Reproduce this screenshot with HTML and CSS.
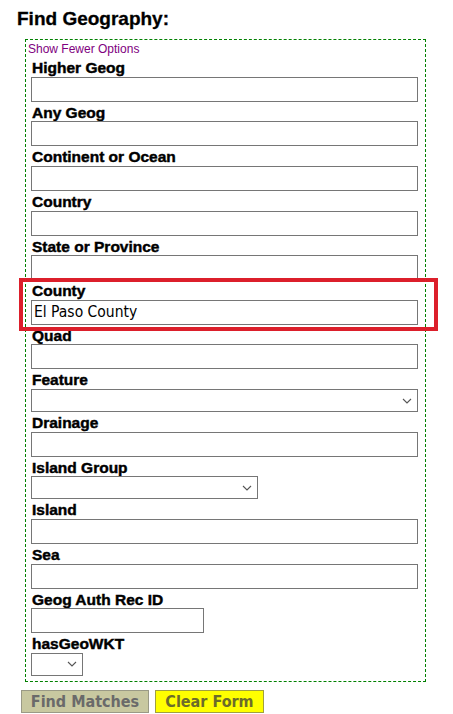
FILE: index.html
```html
<!DOCTYPE html>
<html>
<head>
<meta charset="utf-8">
<title>Find Geography</title>
<link rel="stylesheet" href="styles.css">
</head>
<body>
<h3 class="title">Find Geography:</h3>
<form class="search">
  <div class="box">
    <a class="toggle" href="#">Show Fewer Options</a>
    <div class="fields">
      <div class="field"><label class="lbl">Higher Geog</label><input class="txt full" type="text"></div>
      <div class="field"><label class="lbl">Any Geog</label><input class="txt full" type="text"></div>
      <div class="field"><label class="lbl">Continent or Ocean</label><input class="txt full" type="text"></div>
      <div class="field"><label class="lbl">Country</label><input class="txt full" type="text"></div>
      <div class="field"><label class="lbl">State or Province</label><input class="txt full" type="text"></div>
      <div class="field highlighted"><label class="lbl">County</label><input class="txt full" type="text" value="El Paso County"><span class="mark"></span></div>
      <div class="field"><label class="lbl">Quad</label><input class="txt full" type="text"></div>
      <div class="field"><label class="lbl">Feature</label><select class="sel full"><option></option></select></div>
      <div class="field"><label class="lbl">Drainage</label><input class="txt full" type="text"></div>
      <div class="field"><label class="lbl">Island Group</label><select class="sel mid"><option></option></select></div>
      <div class="field"><label class="lbl">Island</label><input class="txt full" type="text"></div>
      <div class="field"><label class="lbl">Sea</label><input class="txt full" type="text"></div>
      <div class="field"><label class="lbl">Geog Auth Rec ID</label><input class="txt short" type="text"></div>
      <div class="field"><label class="lbl">hasGeoWKT</label><select class="sel tiny"><option></option></select></div>
    </div>
  </div>
  <div class="actions">
    <button type="button" class="btn find">Find Matches</button>
    <button type="reset" class="btn clear">Clear Form</button>
  </div>
</form>
</body>
</html>
```
FILE: styles.css
```css
html, body {
  margin: 0;
  padding: 0;
  background: #ffffff;
}
body {
  font-family: "Liberation Sans", Arial, sans-serif;
  color: #000;
}
.title {
  margin: 8px 0 9px 17px;
  font-size: 19px;
  line-height: 22px;
  font-weight: bold;
  -webkit-text-stroke: 0.3px #000;
}
.search {
  margin: 0;
}
.box {
  margin-left: 25px;
  width: 397px;
  border: 1px dashed #008000;
  padding: 2px 0 3px 2px;
  box-sizing: content-box;
}
.toggle {
  display: block;
  font-size: 12px;
  line-height: 14px;
  color: #800080;
  text-decoration: none;
  margin-bottom: 3px;
  width: max-content;
}
.fields {
  padding-left: 3px;
}
.field {
  display: flex;
  flex-direction: column;
  align-items: flex-start;
  margin-bottom: 2px;
}
.highlighted {
  position: relative;
}
.mark {
  position: absolute;
  left: -12px;
  top: -4px;
  width: 419px;
  height: 53px;
  box-sizing: border-box;
  border: 4px solid #dc1f2b;
  pointer-events: none;
}
.lbl {
  display: block;
  font-size: 15.5px;
  font-weight: bold;
  line-height: 17.65px;
  height: 17.65px;
  padding-left: 1px;
  -webkit-text-stroke: 0.45px #000;
}
.txt {
  box-sizing: border-box;
  height: 25px;
  margin: 0;
  border: 1px solid #767676;
  border-radius: 0;
  padding: 0 2px;
  font-family: "DejaVu Sans Condensed", "DejaVu Sans", sans-serif;
  font-size: 15.5px;
  color: #000;
  background: #fff;
  outline: none;
}
.sel {
  -webkit-appearance: none;
  appearance: none;
  box-sizing: border-box;
  height: 23px;
  margin: 0;
  border: 1px solid #767676;
  border-radius: 0;
  background-color: #fff;
  background-image: url("data:image/svg+xml,%3Csvg xmlns='http://www.w3.org/2000/svg' width='10' height='6' viewBox='0 0 10 6'%3E%3Cpath d='M1 1l4 4 4-4' fill='none' stroke='%23555' stroke-width='1.1'/%3E%3C/svg%3E");
  background-repeat: no-repeat;
  background-position: right 5px center;
  background-size: 10px 6px;
  font-size: 13px;
}
.full { width: 387px; }
.mid { width: 227px; }
.short { width: 173px; }
.tiny { width: 52px; }
.actions {
  display: flex;
  gap: 6px;
  margin: 8px 0 0 21px;
}
.btn {
  box-sizing: border-box;
  height: 23px;
  margin: 0;
  padding: 0;
  border: 1px solid #9a9a86;
  border-radius: 0;
  font-family: "DejaVu Sans Condensed", "DejaVu Sans", sans-serif;
  font-weight: bold;
  font-size: 16px;
  line-height: 21px;
  cursor: pointer;
}
.find {
  width: 128px;
  background: #c8c8a0;
  color: #6a6a6a;
}
.clear {
  width: 109px;
  background: #ffff00;
  color: #6c6c2a;
  border-color: #a0a040;
}
```
